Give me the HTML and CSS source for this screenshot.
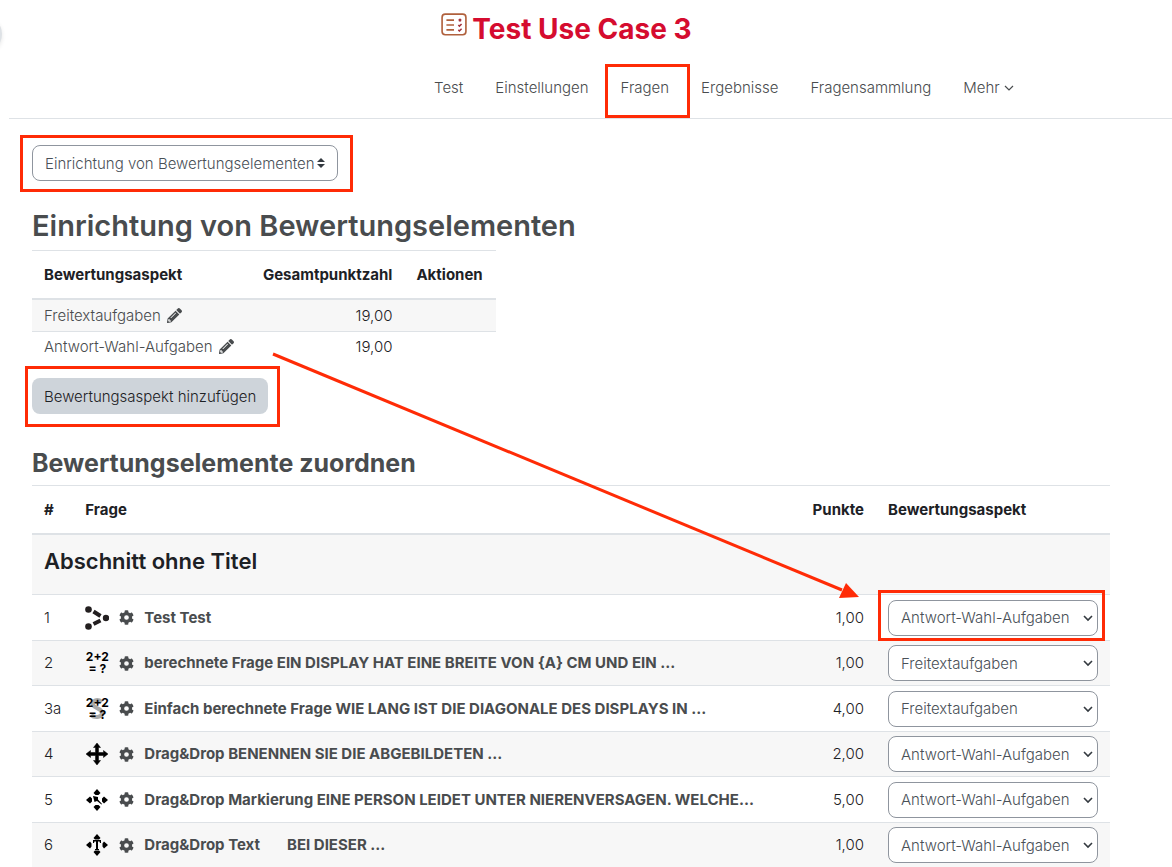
FILE: index.html
```html
<!DOCTYPE html>
<html lang="de">
<head>
    <meta charset="UTF-8">
    <title>Test Use Case 3</title>
    <link rel="stylesheet" href="styles.css">
</head>
<body>
    <!-- icon shapes used more than once -->
    <svg class="sprite" aria-hidden="true">
        <symbol id="gear" viewBox="0 0 512 512"><path fill="currentColor" d="M487 316l-43-25c4-23 4-47 0-70l43-25c5-3 7-8 6-14-11-36-30-69-55-95-4-4-10-5-15-3l-43 25c-18-15-39-27-61-35V25c0-6-4-10-9-12-36-8-74-8-109 0-6 2-9 6-9 12v49c-22 8-43 20-61 35L88 84c-5-2-11-1-15 3-25 27-44 59-55 95-1 6 1 11 6 14l43 25c-4 23-4 47 0 70l-43 25c-5 3-7 8-6 14 11 36 30 68 55 95 4 4 10 5 15 3l43-25c18 15 39 27 61 35v49c0 6 3 10 9 12 36 8 74 8 109 0 5-2 9-6 9-12v-49c22-8 43-20 61-35l43 25c5 2 11 1 15-3 25-27 44-59 55-95 1-6-1-11-6-14zM256 336a80 80 0 1 1 0-160 80 80 0 0 1 0 160z"/></symbol>
        <symbol id="pencil" viewBox="0 0 512 512"><path fill="currentColor" d="M498 142l-46 46c-5 5-13 5-17 0L324 77c-5-5-5-12 0-17l46-46c19-19 49-19 68 0l60 60c19 19 19 49 0 68zM284 100L22 362 0 484c-3 16 12 30 28 28l122-22 262-262c5-5 5-12 0-17L301 100c-5-5-12-5-17 0zM124 340c-5-5-5-14 0-19l154-154c6-5 14-5 20 0s5 14 0 19L144 340c-6 5-14 5-20 0zM88 424h48v36l-64 12-32-32 12-65h36v49z"/></symbol>
    </svg>

    <header class="page-header">
        <h1>
            <svg class="title-icon" viewBox="0 0 24 24" fill="none">
                <rect x="1" y="2" width="22" height="19" rx="3" stroke="#b0603c" stroke-width="1.500"/>
                <path d="M5 7.500h7M5 12h7M5 16.500h7" stroke="#b0603c" stroke-width="1.500"/>
                <path d="M16.500 6.500l2 2m0-2l-2 2M16 12l1 1 2-2M16 16.500l1 1 2-2" stroke="#a3313b" stroke-width="1.400"/>
            </svg>
            Test Use Case 3
        </h1>
        <nav class="tabs">
            <a href="#">Test</a>
            <a href="#">Einstellungen</a>
            <a href="#" class="marked mark-tab">Fragen</a>
            <a href="#">Ergebnisse</a>
            <a href="#">Fragensammlung</a>
            <a href="#">Mehr <svg class="chevron" viewBox="0 0 10 10"><path d="M1 3l4 4 4-4" fill="none" stroke="currentColor" stroke-width="1.200"/></svg></a>
        </nav>
        <button type="button" class="drawer-toggle" aria-label="Blockleiste"></button>
    </header>

    <main>
        <div class="marked mark-menu">
            <select class="page-select" aria-label="Bereich">
                <option>Einrichtung von Bewertungselementen</option>
            </select>
        </div>

        <h2>Einrichtung von Bewertungselementen</h2>
        <table class="aspects">
            <thead>
                <tr><th>Bewertungsaspekt</th><th class="num">Gesamtpunktzahl</th><th>Aktionen</th></tr>
            </thead>
            <tbody>
                <tr>
                    <td><a href="#">Freitextaufgaben <svg class="icon"><use href="#pencil"/></svg></a></td>
                    <td class="num">19,00</td><td></td>
                </tr>
                <tr>
                    <td><a href="#">Antwort-Wahl-Aufgaben <svg class="icon"><use href="#pencil"/></svg></a></td>
                    <td class="num">19,00</td><td></td>
                </tr>
            </tbody>
        </table>
        <div class="marked mark-add">
            <button type="button" class="add">Bewertungsaspekt hinzufügen</button>
        </div>

        <h3>Bewertungselemente zuordnen</h3>
        <table class="questions">
            <thead>
                <tr><th class="nr">#</th><th>Frage</th><th class="num">Punkte</th><th class="aspect">Bewertungsaspekt</th></tr>
            </thead>
            <tbody>
                <tr class="section"><td colspan="4"><h4>Abschnitt ohne Titel</h4></td></tr>
                <tr>
                    <td>1</td>
                    <td>
                        <div class="question">
                            <svg class="qtype" viewBox="0 0 24 24"><g fill="#231f20"><circle cx="3.500" cy="3.500" r="3.300"/><circle cx="21" cy="12" r="3.200"/><circle cx="3.500" cy="20.500" r="3.300"/></g><path d="M8.500 5.500l7 4.500M8.500 18l7-3.500" stroke="#231f20" stroke-width="4"/></svg>
                            <svg class="icon"><use href="#gear"/></svg>
                            <a href="#">Test Test</a>
                        </div>
                    </td>
                    <td class="num">1,00</td>
                    <td><div class="marked mark-row"><select aria-label="Bewertungsaspekt 1"><option>Antwort-Wahl-Aufgaben</option></select></div></td>
                </tr>
                <tr>
                    <td>2</td>
                    <td>
                        <div class="question">
                            <span class="qtype calc">2+2<br>= ?</span>
                            <svg class="icon"><use href="#gear"/></svg>
                            <a href="#">berechnete Frage EIN DISPLAY HAT EINE BREITE VON {A} CM UND EIN ...</a>
                        </div>
                    </td>
                    <td class="num">1,00</td>
                    <td><select aria-label="Bewertungsaspekt 2"><option>Freitextaufgaben</option></select></td>
                </tr>
                <tr>
                    <td>3a</td>
                    <td>
                        <div class="question">
                            <span class="qtype calc simple">2+2<br>= ?</span>
                            <svg class="icon"><use href="#gear"/></svg>
                            <a href="#">Einfach berechnete Frage WIE LANG IST DIE DIAGONALE DES DISPLAYS IN ...</a>
                        </div>
                    </td>
                    <td class="num">4,00</td>
                    <td><select aria-label="Bewertungsaspekt 3a"><option>Freitextaufgaben</option></select></td>
                </tr>
                <tr>
                    <td>4</td>
                    <td>
                        <div class="question">
                            <svg class="qtype" viewBox="0 0 24 24"><path d="M12 1l3.500 4.500h-2v5h5V8.500L23 12l-4.500 3.500v-2h-5v5h2L12 23l-3.500-4.500h2v-5h-5v2L1 12l4.500-3.500v2h5v-5h-2z" stroke="#000" stroke-width=".5"/></svg>
                            <svg class="icon"><use href="#gear"/></svg>
                            <a href="#">Drag&amp;Drop BENENNEN SIE DIE ABGEBILDETEN ...</a>
                        </div>
                    </td>
                    <td class="num">2,00</td>
                    <td><select aria-label="Bewertungsaspekt 4"><option>Antwort-Wahl-Aufgaben</option></select></td>
                </tr>
                <tr>
                    <td>5</td>
                    <td>
                        <div class="question">
                            <svg class="qtype" viewBox="0 0 24 24"><path d="M12 1l3.500 4-2 2h-3l-2-2zM12 23l3.500-4-2-2h-3l-2 2zM1 12l4-3.500 2 2v3l-2 2zM23 12l-4-3.500-2 2v3l2 2zM8 8l5 1v2.500l4 4.500-.5.500L12 13l-2.500 1z"/></svg>
                            <svg class="icon"><use href="#gear"/></svg>
                            <a href="#">Drag&amp;Drop Markierung EINE PERSON LEIDET UNTER NIERENVERSAGEN. WELCHE...</a>
                        </div>
                    </td>
                    <td class="num">5,00</td>
                    <td><select aria-label="Bewertungsaspekt 5"><option>Antwort-Wahl-Aufgaben</option></select></td>
                </tr>
                <tr>
                    <td>6</td>
                    <td>
                        <div class="question">
                            <svg class="qtype" viewBox="0 0 24 24"><path d="M12 1l3.500 4-1.500 1.500h-4L8.500 5zM12 23l3.500-4-1.500-1.500h-4L8.500 19zM1 12l4-3.500 1.500 2v3l-1.500 2zM23 12l-4-3.500-1.500 2v3l1.500 2zM8 7h8v3h-1l-.5-1.500H13v7.500h1v1h-4v-1h1V8.500H9.500L9 10H8z"/></svg>
                            <svg class="icon"><use href="#gear"/></svg>
                            <a href="#">Drag&amp;Drop Text<span class="excerpt">BEI DIESER ...</span></a>
                        </div>
                    </td>
                    <td class="num">1,00</td>
                    <td><select aria-label="Bewertungsaspekt 6"><option>Antwort-Wahl-Aufgaben</option></select></td>
                </tr>
            </tbody>
        </table>

        <!-- arrow from the aspect list to the first assignment -->
        <svg class="arrow" viewBox="0 0 588 250">
            <path d="M1 3L570 239" stroke="#ff2b06" stroke-width="3"/>
            <path d="M587 246l-20 1 7-15z" fill="#ff2b06"/>
        </svg>
    </main>
</body>
</html>
```
FILE: styles.css
```css
* {
    box-sizing: border-box;
}

body {
    margin: 0;
    font-family: Inter, "Liberation Sans", sans-serif;
    font-size: 15px;
    font-weight: 300;
    line-height: 22px;
    color: #1d2125;
    background: #fff;
    overflow: hidden;
}

a {
    color: #494c4e;
    text-decoration: none;
}

.sprite {
    position: absolute;
    width: 0;
    height: 0;
}

.page-header {
    margin-left: 9px;
    padding-top: 12px;
    border-bottom: 1px solid #dee2e6;
}

h1 {
    display: flex;
    justify-content: center;
    gap: 5px;
    margin: 0 48px 0 0;
    font-size: 28px;
    line-height: 34px;
    color: #d50c2f;
}

.title-icon {
    width: 26px;
    height: 26px;
}

.tabs {
    display: flex;
    justify-content: center;
    margin: 18px 0 0;
    padding-left: 267px;
}

.tabs a {
    padding: 13px 16px 19px;
}

.chevron {
    width: 10px;
    height: 10px;
}

.drawer-toggle {
    position: absolute;
    left: -34px;
    top: 16px;
    width: 36px;
    height: 36px;
    padding: 0;
    border: 0;
    border-radius: 50%;
    background: #dee2e6;
    box-shadow: 0 2px 4px rgba(0, 0, 0, 0.1);
}

main {
    position: relative;
    padding: 26px 62px 0 32px;
}

/* red frames round the highlighted controls */
.marked {
    position: relative;
    width: fit-content;
}

.marked::after {
    content: "";
    position: absolute;
    border: 3px solid #ff2b06;
    pointer-events: none;
}

.mark-tab::after {
    inset: 0 -5px 0 0;
}

.mark-menu::after {
    inset: -10px -15px -11px -12px;
}

.mark-add::after {
    inset: -12px -12px -13px -7px;
}

.mark-row::after {
    inset: -10px -7px -5px -10px;
}

select {
    display: block;
    appearance: none;
    width: 210px;
    height: 36px;
    padding: 1px 12px 0;
    border: 1px solid #8f959e;
    border-radius: 8px;
    font: inherit;
    color: #495057;
    background: #fff url("data:image/svg+xml,%3Csvg xmlns='http://www.w3.org/2000/svg' viewBox='0 0 10 10'%3E%3Cpath d='M1 3l4 4 4-4' fill='none' stroke='%23343a40' stroke-width='1.600'/%3E%3C/svg%3E") no-repeat right 4px center / 10px;
}

.page-select {
    width: 306px;
    background-image: url("data:image/svg+xml,%3Csvg xmlns='http://www.w3.org/2000/svg' viewBox='0 0 8 10'%3E%3Cpath fill='%23343a40' d='M4 0L0 4h8zM4 10L0 6h8z'/%3E%3C/svg%3E");
    background-position: right 12px center;
    background-size: 8px 10px;
}

h2,
h3 {
    color: #494c4e;
}

h2 {
    margin: 28px 0 7px;
    font-size: 29px;
    font-weight: 600;
    line-height: 34px;
}

h3 {
    margin: 34px 0 7px;
    font-size: 25px;
    line-height: 30px;
}

h4 {
    margin: 0;
    font-size: 22px;
    font-weight: 600;
    line-height: 28px;
}

table {
    border-collapse: separate;
    border-spacing: 0;
}

th,
td {
    padding: 4px 12px;
    border-top: 1px solid #dee2e6;
    text-align: left;
}

th {
    padding: 13px 12px 12px;
    border-bottom: 2px solid #dee2e6;
    font-weight: 700;
    line-height: 22px;
}

tbody tr:first-child td {
    border-top: 0;
}

tbody tr:nth-child(odd) {
    background: #f7f7f7;
}

.num {
    text-align: right;
}

.icon {
    width: 15px;
    height: 15px;
    flex: none;
    color: #494c4e;
}

.aspects {
    width: 464px;
}

.aspects td {
    padding-top: 5px;
}

.aspects .icon {
    margin-left: 2px;
    vertical-align: -2px;
}

.aspects tr:last-child td {
    padding-top: 4px;
}

.add {
    display: block;
    height: 36px;
    padding: 1px 12px 0;
    border: 0;
    border-radius: 8px;
    font: inherit;
    color: #1d2125;
    background: #ced4da;
}

.mark-add {
    margin-top: 16px;
}

.questions {
    width: 100%;
}

.questions .nr {
    width: 41px;
}

.questions .aspect {
    width: 234px;
}

.questions .section td {
    padding: 12px 12px 19px;
}

/* rows alternate so that two of them make 91px */
.questions tr:nth-child(even) td {
    height: 46px;
}

.question {
    display: flex;
    align-items: center;
}

.question a {
    margin-left: 10px;
    font-weight: 700;
}

.qtype {
    width: 24px;
    height: 24px;
    flex: none;
    margin-right: 10px;
}

.calc {
    font-size: 12px;
    font-weight: 700;
    line-height: 12px;
    color: #000;
    text-align: center;
    white-space: nowrap;
}

.simple {
    background: url("data:image/svg+xml,%3Csvg xmlns='http://www.w3.org/2000/svg' viewBox='0 0 24 24'%3E%3Cpath d='M17 5C12 1 6 4 8 8s9 3 9 8-8 5-11 2' fill='none' stroke='%23aaa' stroke-width='4'/%3E%3C/svg%3E");
}

.excerpt {
    margin-left: 27px;
}

.arrow {
    position: absolute;
    left: 272px;
    top: 232px;
    width: 588px;
    height: 250px;
}
```
